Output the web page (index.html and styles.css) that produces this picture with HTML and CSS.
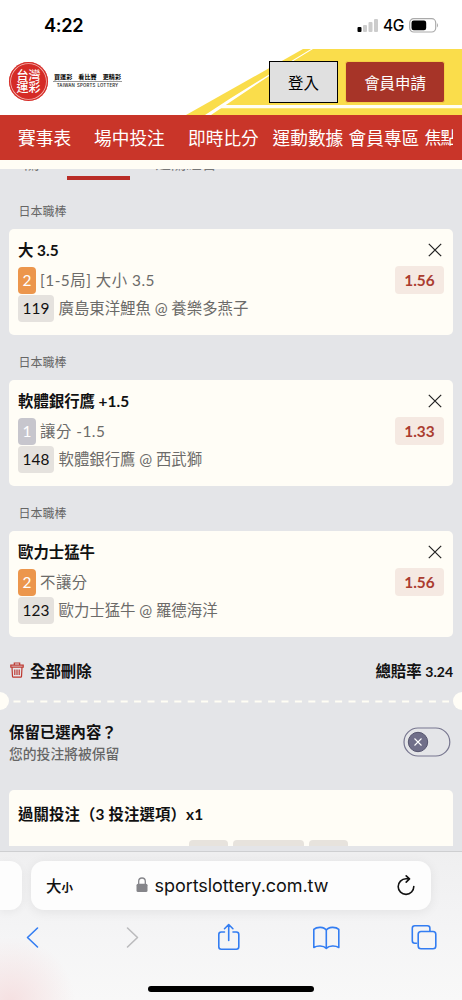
FILE: index.html
```html
<!DOCTYPE html>
<html lang="zh-Hant">
<head>
<meta charset="utf-8">
<meta name="viewport" content="width=device-width, initial-scale=1">
<title>台灣運彩</title>
<link rel="stylesheet" href="styles.css">
</head>
<body>
<div class="phone">
  <div class="status">
    <span class="time">4:22</span>
    <div class="status-right">
      <svg class="signal" width="22" height="14" viewBox="0 0 22 14"><rect x="0.5" y="9" width="4" height="5" rx="1" fill="#000"/><rect x="6" y="7" width="4" height="7" rx="1" fill="#ccc"/><rect x="11.500" y="4" width="4" height="10" rx="1" fill="#ccc"/><rect x="17" y="1" width="4" height="13" rx="1" fill="#ccc"/></svg>
      <span class="network">4G</span>
      <svg width="30" height="15" viewBox="0 0 30 15"><rect x="0.700" y="0.700" width="26" height="13.300" rx="4" fill="none" stroke="#aaa" stroke-width="1.200"/><rect x="2.500" y="2.500" width="14.700" height="9.800" rx="2.200"/><path d="M28 5q2 2.300 0 4.600z" fill="#aaa"/></svg>
    </div>
  </div>

  <header class="site-header">
    <svg class="stripes" width="462" height="66" viewBox="0 0 462 66">
      <path d="M186 66L303 0H462V66z" fill="#fadd4b"/>
      <path d="M205 66L231 49 270 25 311 0H313L272 25 231 52.500 211 66z" fill="#fff"/>
      <path d="M222 56H462V59.300H217z" fill="#fffef4"/>
    </svg>
    <div class="brand">
      <div class="seal"><span>台灣</span><span>運彩</span></div>
      <div class="slogan">
        <div class="slogan-zh"><span>買運彩</span><span>看比賽</span><span>更精彩</span></div>
        <div class="slogan-en">TAIWAN SPORTS LOTTERY</div>
      </div>
    </div>
    <div class="account">
      <div class="login">登入</div>
      <div class="join">會員申請</div>
    </div>
  </header>

  <nav class="nav">
    <span class="n1">賽事表</span><span class="n2">場中投注</span><span class="n3">即時比分</span><span class="n4">運動數據</span><span class="n5">會員專區</span><span class="n6">焦點</span>
  </nav>
  <div class="strip"></div>

  <main class="slip">
    <div class="tabs"><span class="tab-a">關</span><span class="tab-b">過關組合</span></div>
    <div class="tab-line"></div>

    <section class="bet">
      <div class="league">日本職棒</div>
      <div class="card">
        <div class="picks">
          <div class="title">大<span class="num">3.5</span></div>
          <div class="line"><span class="tag orange">2</span><span class="market">[1-5局] 大小 3.5</span></div>
          <div class="line"><span class="tag code">119</span><span class="match">廣島東洋鯉魚<span class="at">@</span>養樂多燕子</span></div>
        </div>
        <div class="side"><svg class="close" width="14" height="14" viewBox="0 0 14 14"><path d="M.8.8l12.400 12.400M13.200.8L.8 13.200"/></svg><div class="odds">1.56</div></div>
      </div>
    </section>
    <section class="bet">
      <div class="league">日本職棒</div>
      <div class="card">
        <div class="picks">
          <div class="title">軟體銀行鷹<span class="num">+1.5</span></div>
          <div class="line"><span class="tag grey">1</span><span class="market">讓分 -1.5</span></div>
          <div class="line"><span class="tag code">148</span><span class="match">軟體銀行鷹<span class="at">@</span>西武獅</span></div>
        </div>
        <div class="side"><svg class="close" width="14" height="14" viewBox="0 0 14 14"><path d="M.8.8l12.400 12.400M13.200.8L.8 13.200"/></svg><div class="odds">1.33</div></div>
      </div>
    </section>
    <section class="bet">
      <div class="league">日本職棒</div>
      <div class="card">
        <div class="picks">
          <div class="title">歐力士猛牛</div>
          <div class="line"><span class="tag orange">2</span><span class="market">不讓分</span></div>
          <div class="line"><span class="tag code">123</span><span class="match">歐力士猛牛<span class="at">@</span>羅德海洋</span></div>
        </div>
        <div class="side"><svg class="close" width="14" height="14" viewBox="0 0 14 14"><path d="M.8.8l12.400 12.400M13.200.8L.8 13.200"/></svg><div class="odds">1.56</div></div>
      </div>
    </section>

    <div class="summary">
      <div class="delete"><svg width="14" height="16" viewBox="0 0 14 16" fill="none" stroke="#bd3830" stroke-width="1.200"><path d="M.8 3.200h12.400v1.900H.8zM4.300 3V1h5.400v2M2 5.200l.5 9.200q0 .8.900.8h7.200q.9 0 .9-.8l.5-9.200M4.800 7.500v5.500M7 7.500v5.500M9.200 7.500v5.500"/></svg><span>全部刪除</span></div>
      <div class="total">總賠率 <span>3.24</span></div>
    </div>

    <div class="tear"><i class="notch"></i><svg width="436" height="3" viewBox="0 0 436 3"><path d="M.5 1.500H436" stroke="#fffef4" stroke-width="2.200" stroke-dasharray="7 6.400"/></svg><i class="notch right"></i></div>

    <div class="keep">
      <div><div class="keep-title">保留已選內容？</div><div class="keep-sub">您的投注將被保留</div></div>
      <svg class="toggle" width="48" height="30" viewBox="0 0 48 30"><rect x="1" y="1" width="45.800" height="28" rx="14" fill="none" stroke="#77768f" stroke-width="1.200"/><circle cx="15" cy="15" r="9.700" fill="#706f89" stroke="#55546d"/><path d="M11.500 11.500l7 7M18.500 11.500l-7 7" stroke="#fff" stroke-width="1.100"/></svg>
    </div>

    <div class="parlay"><div class="parlay-title">過關投注（3 投注選項）x1</div><div class="chips"><i></i><i class="wide"></i><i></i></div></div>
  </main>

  <footer class="browser">
    <div class="address-row">
      <div class="previous"></div>
      <div class="address">
        <div class="size">大<small>小</small></div>
        <div class="domain"><svg width="12" height="16" viewBox="0 0 12 16"><rect x="0.500" y="6.800" width="11" height="8.200" rx="1.500" fill="#85858a"/><path d="M2.700 7V4.300a3.300 3.300 0 0 1 6.600 0V7" fill="none" stroke="#85858a" stroke-width="1.300"/></svg><span>sportslottery.com.tw</span></div>
        <svg class="reload" width="18" height="21" viewBox="0 0 18 21" fill="none" stroke="#111" stroke-width="1.600" stroke-linecap="round" stroke-linejoin="round"><path d="M16.800 11.500A7.800 7.800 0 1 1 9 3.800h3.200M9.200.9l3.300 3-3.300 3.200"/></svg>
      </div>
    </div>
    <div class="tools">
      <svg width="462" height="30" viewBox="0 0 462 30" fill="none" stroke="#337df2" stroke-width="1.600" stroke-linecap="round" stroke-linejoin="round">
        <path d="M37.500 5L27.500 14.500l10 9.500"/>
        <path d="M127.500 5l10 9.500-10 9.500" stroke="#bbbbbd"/>
        <path d="M224.500 9h-3.200q-2.500 0-2.500 2.500v12.300q0 2.500 2.500 2.500h15q2.500 0 2.500-2.500V11.500q0-2.500-2.500-2.500H233M228.700 17.500V1.500M224.500 5.700l4.200-4.200 4.200 4.200"/>
        <path d="M326.300 7.200c-2-3.600-9.500-3.600-12.500-.8v18.100c3.600-2.200 9.500-2 12.500.8 3-2.800 8.900-3 12.500-.8V6.400c-3-2.800-10.500-2.800-12.500.8zM326.300 7.200v18.100"/>
        <path d="M416.500 20.300h-1.700q-2.500 0-2.500-2.500V5.300q0-2.500 2.500-2.500h12.600q2.500 0 2.500 2.500v2.900"/>
        <rect x="418.200" y="8.500" width="17.600" height="17.300" rx="2.800"/>
      </svg>
    </div>
    <div class="home"></div>
  </footer>
</div>
</body>
</html>
```
FILE: styles.css
```css
* { box-sizing: border-box; }
body { margin: 0; font-family: Lato, "Noto Sans CJK TC", sans-serif; }
i { font-style: normal; }
svg { display: block; flex: none; }
.phone { width: 462px; height: 1000px; overflow: hidden; background: #fff; display: flex; flex-direction: column; }
.phone > * { flex: none; }

.status { height: 49px; padding: 1px 23px 0 44px; display: flex; justify-content: space-between; align-items: center; font-family: Inter, sans-serif; }
.time { font-size: 18.200px; font-weight: 600; letter-spacing: -.3px; }
.status-right { display: flex; align-items: center; }
.network { width: 26px; margin-left: 4px; font-size: 15.500px; font-weight: 500; letter-spacing: -.5px; }

.site-header { height: 66px; position: relative; display: flex; justify-content: space-between; }
.stripes { position: absolute; left: 0; top: 0; }
.brand { position: relative; display: flex; padding: 13px 0 0 9px; }
.seal { width: 39px; height: 39px; border-radius: 50%; background: #d52b26; box-shadow: inset 0 0 0 1.200px #d52b26, inset 0 0 0 2px #f3b9b4; color: #fff; display: flex; flex-direction: column; align-items: center; justify-content: center; font-size: 12px; line-height: 12px; font-weight: 500; }
.slogan { width: 69px; margin-left: 5px; padding-top: 9px; }
.slogan-zh { height: 11px; line-height: 11px; border-bottom: 1px solid #999; padding: 0 1px; display: flex; justify-content: space-between; font-size: 6.100px; font-weight: 700; }
.slogan-en { text-align: center; font-family: Inter, sans-serif; font-size: 4.300px; line-height: 8px; font-weight: 600; color: #333; white-space: nowrap; letter-spacing: .18px; word-spacing: .8px; }
.account { position: relative; display: flex; gap: 7px; padding: 12px 17px 0 0; font-size: 15.400px; }
.login, .join { height: 42px; display: flex; align-items: center; justify-content: center; padding-bottom: 1px; }
.login { width: 69px; background: #e0e0e0; border: 1px solid #000; }
.join { width: 100px; background: #a73428; border: 1px solid #f5cf45; border-radius: 3px; color: #fff; }

.nav { height: 44.500px; background: #c93529; color: #fff; display: flex; align-items: center; padding-left: 18px; width: 453px; overflow: hidden; font-size: 17.700px; white-space: nowrap; box-shadow: 9px 0 #c93529; padding-bottom: 1px; }
.nav span { flex: none; width: 71px; }
.nav .n1 { width: 53px; }
.n2, .n3 { margin-left: 23px; }
.n4 { margin-left: 13.500px; }
.n5, .n6 { margin-left: 5px; }
.nav .n6 { font-size: 17px; letter-spacing: -1px; }
.strip { height: 9px; background: #fffdf5; }

.slip { height: 682px; background: #e4e5e8; overflow: hidden; }
.tabs { height: 2px; overflow: hidden; display: flex; align-items: flex-end; font-size: 15.400px; line-height: 20px; color: #777; }
.tabs span { margin-bottom: -2.500px; }
.tab-a { margin-left: 24px; }
.tab-b { margin-left: 116px; }
.tab-line { width: 63px; height: 4px; margin: 5px 0 0 67px; background: #b92d27; }
.league { height: 49.500px; padding: 0 0 0 18.500px; font-size: 12px; line-height: 64px; color: #666; }
.bet + .bet .league { height: 45px; line-height: 56px; }
.card { height: 106px; margin: 0 9px; padding: 9px 9px 0; border-radius: 5px; background: #fffdf6; display: flex; justify-content: space-between; }
.title { height: 28.500px; line-height: 25px; font-size: 15.400px; font-weight: 700; color: #111; }
.num { margin-left: 3.500px; letter-spacing: .1px; }
.line { display: flex; align-items: center; height: 28px; font-size: 15.400px; color: #6c6b69; white-space: nowrap; }
.tag { height: 27px; line-height: 26px; border-radius: 4px; text-align: center; }
.orange, .grey { width: 18px; color: #fff; background: #ec964c; }
.grey { background: #c7c6cd; }
.code { width: 36px; color: #111; background: #e5e2de; }
.market, .match { margin-left: 4px; line-height: 24px; padding-bottom: 2px; }
.market { letter-spacing: .5px; }
.match { margin-left: 4.500px; }
.at { display: inline-block; width: 20.500px; text-align: center; }
.side { display: flex; flex-direction: column; align-items: flex-end; padding-top: 5px; }
.close { margin-right: 2px; fill: none; stroke: #222; stroke-width: 1.200; }
.odds { width: 49px; height: 28px; margin-top: 9px; border-radius: 4px; background: #f5e9e2; color: #ab3c30; font-size: 15.400px; line-height: 28px; font-weight: 700; text-align: center; }

.summary { height: 55px; padding: 12px 9px 0 10px; display: flex; justify-content: space-between; font-size: 15.400px; font-weight: 700; line-height: 44px; color: #111; }
.delete { display: flex; align-items: center; height: 44px; gap: 6px; }
.delete svg { margin-top: -3px; }
.total span { font-size: 14px; }
.tear { height: 18px; display: flex; align-items: center; justify-content: space-between; }
.notch { width: 9px; height: 18px; border-radius: 0 9px 9px 0; background: #fffdf6; }
.notch.right { border-radius: 9px 0 0 9px; }
.keep { height: 80px; padding: 11px 11px 0 9px; display: flex; justify-content: space-between; }
.keep-title { font-size: 15.400px; line-height: 23px; font-weight: 700; color: #111; }
.keep-sub { font-size: 13.800px; line-height: 19px; font-weight: 500; color: #666; }
.toggle { margin-top: 6px; }
.parlay { height: 56px; margin: 0 9px; border-radius: 5px 5px 0 0; background: #fffdf6; overflow: hidden; }
.parlay-title { height: 50px; padding-left: 9px; line-height: 48px; font-size: 15.400px; font-weight: 700; color: #111; letter-spacing: .12px; }
.chips { display: flex; gap: 5px; padding-left: 179.500px; }
.chips i { width: 39px; height: 27px; border-radius: 4px; background: #e7e3dd; }
.chips .wide { width: 71.500px; }

.browser { height: 150px; border-top: 1px solid #cecfd1; background: radial-gradient(circle at 10px 150px, #f5e0e1 0, #f5e3e400 65px), linear-gradient(#efeff0, #f5f5f6 60%, #f8f8f8); }
.address-row { display: flex; gap: 9px; padding-top: 9px; }
.previous { width: 22px; height: 49px; border-radius: 0 12px 12px 0; background: #fdfdfd; box-shadow: 0 2px 9px #0000000d; }
.address { width: 400px; height: 49px; border-radius: 13px; background: #fdfdfd; box-shadow: 0 2px 12px #00000012; padding: 0 16px 0 15px; display: flex; align-items: center; color: #111; }
.size { width: 89.500px; font-size: 15.500px; font-weight: 500; }
.size small { font-size: 11.500px; font-weight: 700; }
.domain { display: flex; align-items: center; gap: 7px; font-family: Inter, sans-serif; font-size: 18px; letter-spacing: -.05px; }
.reload { margin-left: auto; }
.tools { padding-top: 13px; }
.home { width: 166px; height: 6px; margin: 33px auto 0; border-radius: 3px; background: #000; }
```
